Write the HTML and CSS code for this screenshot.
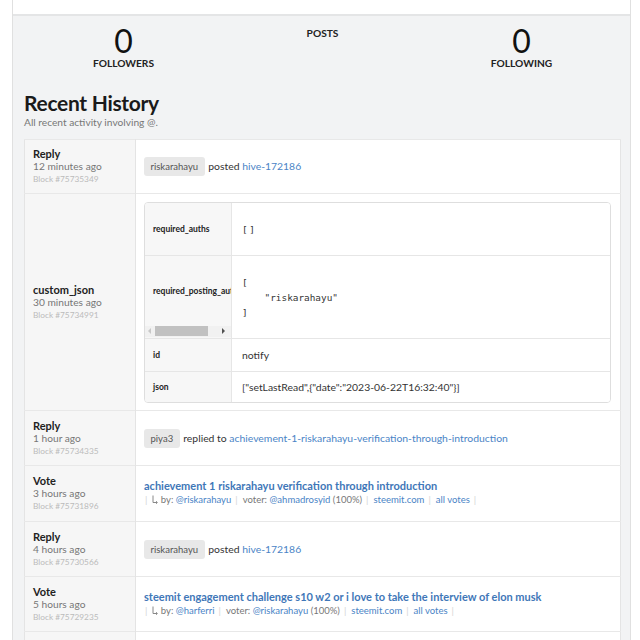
FILE: index.html
```html
<!DOCTYPE html>
<html>
<head>
<meta charset="utf-8">
<link rel="stylesheet" href="styles.css">
</head>
<body>
<div class="page">
  <div class="topcard"></div>
  <div class="main">
    <div class="stats">
      <div class="stat"><div class="num">0</div><div class="lbl">FOLLOWERS</div></div>
      <div class="stat"><div class="lbl posts">POSTS</div></div>
      <div class="stat"><div class="num">0</div><div class="lbl">FOLLOWING</div></div>
    </div>
    <h2 class="title">Recent History</h2>
    <div class="subtitle">All recent activity involving @.</div>

    <table class="hist">
      <tr class="r1">
        <td class="meta"><div class="op">Reply</div><div class="ago">12 minutes ago</div><div class="blk">Block #75735349</div></td>
        <td class="body"><span class="chip">riskarahayu</span> posted <a class="lnk">hive-172186</a></td>
      </tr>
      <tr class="r2">
        <td class="meta"><div class="op">custom_json</div><div class="ago">30 minutes ago</div><div class="blk">Block #75734991</div></td>
        <td class="body bodyjson">
          <table class="js">
            <tr class="j1"><th><div class="k">required_auths</div></th><td><pre class="pre br">[]</pre></td></tr>
            <tr class="j2"><th class="scroll">
              <div class="scrollwrap">
                <div class="k clip">required_posting_auths</div>
                <div class="sbar"><span class="al"></span><span class="thumb"></span><span class="ar"></span></div>
              </div>
            </th><td><pre class="pre">[
    "riskarahayu"
]</pre></td></tr>
            <tr class="j3"><th><div class="k">id</div></th><td>notify</td></tr>
            <tr class="j4"><th><div class="k">json</div></th><td>["setLastRead",{"date":"2023-06-22T16:32:40"}]</td></tr>
          </table>
        </td>
      </tr>
      <tr class="r3">
        <td class="meta"><div class="op">Reply</div><div class="ago">1 hour ago</div><div class="blk">Block #75734335</div></td>
        <td class="body"><span class="chip">piya3</span> replied to <a class="lnk">achievement-1-riskarahayu-verification-through-introduction</a></td>
      </tr>
      <tr class="r4">
        <td class="meta"><div class="op">Vote</div><div class="ago">3 hours ago</div><div class="blk">Block #75731896</div></td>
        <td class="body">
          <div class="vtitle">achievement 1 riskarahayu verification through introduction</div>
          <div class="vmeta"><span class="sep">|</span><svg class="ico" width="6" height="9" viewBox="0 0 6 9"><path d="M1 0.5V7.5H5" fill="none" stroke="#888" stroke-width="1"/><path d="M4 6L5.5 7.5L4 9" fill="none" stroke="#888" stroke-width="0.8"/></svg> by: <a class="lnk">@riskarahayu</a><span class="sep">|</span>voter: <a class="lnk">@ahmadrosyid</a> (100%)<span class="sep">|</span><a class="lnk">steemit.com</a><span class="sep">|</span><a class="lnk">all votes</a><span class="sep">|</span></div>
        </td>
      </tr>
      <tr class="r5">
        <td class="meta"><div class="op">Reply</div><div class="ago">4 hours ago</div><div class="blk">Block #75730566</div></td>
        <td class="body"><span class="chip">riskarahayu</span> posted <a class="lnk">hive-172186</a></td>
      </tr>
      <tr class="r6">
        <td class="meta"><div class="op">Vote</div><div class="ago">5 hours ago</div><div class="blk">Block #75729235</div></td>
        <td class="body">
          <div class="vtitle">steemit engagement challenge s10 w2 or i love to take the interview of elon musk</div>
          <div class="vmeta"><span class="sep">|</span><svg class="ico" width="6" height="9" viewBox="0 0 6 9"><path d="M1 0.5V7.5H5" fill="none" stroke="#888" stroke-width="1"/><path d="M4 6L5.5 7.5L4 9" fill="none" stroke="#888" stroke-width="0.8"/></svg> by: <a class="lnk">@harferri</a><span class="sep">|</span>voter: <a class="lnk">@riskarahayu</a> (100%)<span class="sep">|</span><a class="lnk">steemit.com</a><span class="sep">|</span><a class="lnk">all votes</a><span class="sep">|</span></div>
        </td>
      </tr>
      <tr class="r7">
        <td class="meta"></td>
        <td class="body"></td>
      </tr>
    </table>
  </div>
</div>
</body>
</html>
```

FILE: styles.css
```css
html, body {
  margin: 0;
  padding: 0;
  background: #ffffff;
  font-family: Lato, "Open Sans", "Liberation Sans", sans-serif;
  color: #222;
  overflow: hidden;
}
.page {
  margin-left: 12px;
  width: 617px;
  border-left: 1px solid #e0e0e0;
  border-right: 1px solid #e0e0e0;
  height: 640px;
  overflow: hidden;
  background: #f2f3f4;
}
.topcard {
  height: 14px;
  background: #fff;
  border-bottom: 2px solid #e4e5e6;
}
.main {
  padding: 0 9px 0 11px;
}
.stats {
  display: grid;
  grid-template-columns: 1fr 1fr 1fr;
  padding-top: 9px;
  height: 53px;
}
.stat {
  text-align: center;
}
.num {
  font-size: 32px;
  line-height: 32px;
  font-weight: 400;
  color: #111;
}
.lbl {
  font-size: 10.2px;
  line-height: 13px;
  font-weight: 700;
  color: #222;
}
.lbl.posts {
  margin-top: 2px;
}
.title {
  margin: 12px 0 0 0;
  font-size: 21px;
  line-height: 26px;
  font-weight: 700;
  color: #1a1a1a;
  letter-spacing: -0.3px;
}
.subtitle {
  font-size: 10.2px;
  line-height: 13px;
  color: #777;
  margin-bottom: 10px;
}
.hist {
  width: 100%;
  border-collapse: collapse;
  background: #fff;
  border: 1px solid #e4e4e4;
}
.hist > tbody > tr > td {
  border-top: 1px solid #e8e8e8;
  vertical-align: middle;
}
td.meta {
  width: 94px;
  background: #f6f6f6;
  border-right: 1px solid #e4e4e4;
  padding: 6px 8px 7px 8px;
}
.op {
  font-size: 11px;
  line-height: 13px;
  font-weight: 700;
  color: #222;
}
.ago {
  font-size: 10.2px;
  line-height: 13px;
  color: #777;
}
.blk {
  font-size: 8.3px;
  line-height: 12px;
  color: #bbb;
}
td.body {
  padding: 0 9px 0 8px;
  font-size: 10.4px;
  color: #333;
}
.r1 { height: 54px; }
.r3 { height: 55px; }
.r4 { height: 56px; }
.r5 { height: 55px; }
.r6 { height: 55px; }
.r7 { height: 40px; }
td.bodyjson {
  padding-top: 8px;
  padding-bottom: 7px;
}
.chip {
  display: inline-block;
  background: #e8e8e8;
  border-radius: 3px;
  padding: 0 6.5px;
  height: 19px;
  line-height: 19px;
  font-size: 9.5px;
  color: #555;
  margin-right: 1px;
}
.lnk {
  color: #4a84c6;
  text-decoration: none;
}
.js {
  width: 100%;
  border-collapse: separate;
  border-spacing: 0;
  border: 1px solid #dedede;
  border-radius: 4px;
  overflow: hidden;
}
.js th, .js td {
  border-top: 1px solid #e6e6e6;
  vertical-align: middle;
  text-align: left;
}
.js tr:first-child th, .js tr:first-child td {
  border-top: none;
}
.js th {
  width: 78px;
  background: #f7f7f7;
  border-right: 1px solid #e6e6e6;
  padding: 0 0 0 8px;
  font-weight: 700;
  font-size: 8.5px;
  color: #222;
}
.js td {
  padding: 0 9px 0 10px;
  font-size: 10.4px;
  color: #333;
  background: #fff;
}
.k {
  white-space: nowrap;
}
.j1 { height: 52px; }
.j2 { height: 82px; }
.j3 { height: 33px; }
.j4 { height: 31px; }
.js th.scroll {
  padding: 0;
  height: 82px;
}
.scrollwrap {
  display: flex;
  flex-direction: column;
  height: 81px;
  width: 86px;
}
.clip {
  flex: 1;
  display: flex;
  align-items: center;
  padding-left: 8px;
  overflow: hidden;
}
.sbar {
  height: 11px;
  background: #f1f1f1;
  display: flex;
  align-items: center;
  margin-bottom: 1px;
}
.al {
  width: 0; height: 0;
  margin: 0 4px 0 3px;
  border-top: 3px solid transparent;
  border-bottom: 3px solid transparent;
  border-right: 3px solid #c8c8c8;
}
.thumb {
  width: 53px;
  height: 10px;
  background: #c1c1c1;
}
.ar {
  width: 0; height: 0;
  margin-left: 14px;
  border-top: 3px solid transparent;
  border-bottom: 3px solid transparent;
  border-left: 3px solid #505050;
}
.pre {
  margin: 0;
  font-family: "DejaVu Sans Mono", "Liberation Mono", monospace;
  font-size: 9.4px;
  line-height: 15px;
  color: #333;
}
.pre.br {
  letter-spacing: 1.5px;
}
.vtitle {
  font-size: 11px;
  line-height: 14px;
  font-weight: 700;
  color: #3f77b8;
}
.vmeta {
  font-size: 9.5px;
  line-height: 13px;
  color: #777;
  margin-bottom: 2px;
}
.sep {
  color: #d4d4d4;
  margin: 0 5px 0 4px;
}
.vmeta .sep:first-child {
  margin-left: 1px;
}
.ico {
  vertical-align: -1px;
}
```
